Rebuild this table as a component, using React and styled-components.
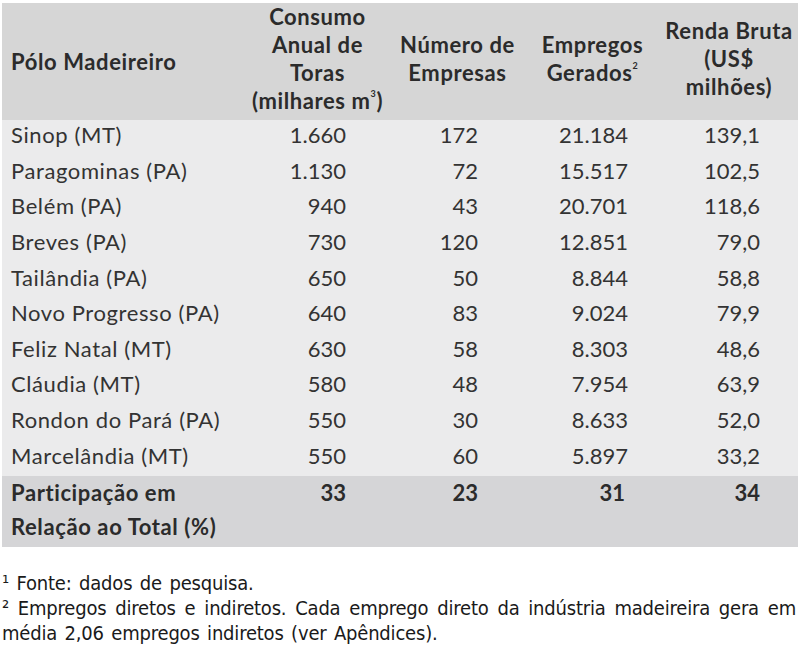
import React from 'react';
import styled, { createGlobalStyle } from 'styled-components';

const GlobalStyle = createGlobalStyle`
  html, body {
    margin: 0;
    padding: 0;
    background: #ffffff;
  }
`;

const Page = styled.div`
  width: 800px;
  height: 650px;
  padding: 3px 2px 0 2px;
  box-sizing: border-box;
  font-family: Lato, "Open Sans", sans-serif;
`;

const Table = styled.div`
  display: grid;
  grid-template-columns: 243px 145px 135px 135px 138px;
  background: #ebebec;
  color: #333333;
`;

const HeadCell = styled.div`
  background: #d6d6d6;
  height: 117px;
  box-sizing: border-box;
  padding-bottom: ${(p) => (p.left ? '0' : '6px')};
  display: flex;
  align-items: center;
  justify-content: ${(p) => (p.left ? 'flex-start' : 'center')};
  padding-left: ${(p) => (p.left ? '9px' : '0')};
  text-align: center;
  font-weight: 700;
  font-size: 22px;
  letter-spacing: 0.6px;
  line-height: 28px;
  color: #2b2b2b;
  white-space: nowrap;
`;

const Sup = styled.sup`
  font-size: 9px;
  vertical-align: 12px;
  line-height: 0;
`;

const Cell = styled.div`
  height: 35.6px;
  box-sizing: border-box;
  padding-bottom: 6px;
  display: flex;
  align-items: center;
  justify-content: ${(p) => (p.left ? 'flex-start' : 'flex-end')};
  padding-left: ${(p) => (p.left ? '9px' : '0')};
  padding-right: ${(p) => p.pr || 0}px;
  font-size: 22px;
  letter-spacing: ${(p) => (p.left ? '0.6px' : '0')};
  white-space: nowrap;
`;

const TotalCell = styled.div`
  background: #d5d5d7;
  height: 71px;
  display: flex;
  flex-direction: column;
  align-items: ${(p) => (p.left ? 'flex-start' : 'flex-end')};
  padding-left: ${(p) => (p.left ? '9px' : '0')};
  padding-right: ${(p) => p.pr || 0}px;
  padding-top: 0;
  box-sizing: border-box;
  font-weight: 700;
  font-size: 22px;
  letter-spacing: ${(p) => (p.left ? '0.6px' : '0')};
  line-height: 34px;
  color: #2b2b2b;
  white-space: nowrap;
`;

const Notes = styled.div`
  margin-top: 24px;
  font-family: "DejaVu Sans Condensed", "DejaVu Sans", Verdana, sans-serif;
  font-size: 20px;
  letter-spacing: -0.2px;
  line-height: 25px;
  color: #1a1a1a;
  text-align: justify;
  padding-right: 2px;
  word-spacing: 2px;
`;

const rows = [
  ['Sinop (MT)', '1.660', '172', '21.184', '139,1'],
  ['Paragominas (PA)', '1.130', '72', '15.517', '102,5'],
  ['Belém (PA)', '940', '43', '20.701', '118,6'],
  ['Breves (PA)', '730', '120', '12.851', '79,0'],
  ['Tailândia (PA)', '650', '50', '8.844', '58,8'],
  ['Novo Progresso (PA)', '640', '83', '9.024', '79,9'],
  ['Feliz Natal (MT)', '630', '58', '8.303', '48,6'],
  ['Cláudia (MT)', '580', '48', '7.954', '63,9'],
  ['Rondon do Pará (PA)', '550', '30', '8.633', '52,0'],
  ['Marcelândia (MT)', '550', '60', '5.897', '33,2'],
];

const pads = [0, 44, 47, 32, 38];

export default function App() {
  return (
    <Page>
      <GlobalStyle />
      <Table>
        <HeadCell left>Pólo Madeireiro</HeadCell>
        <HeadCell>
          <div>
            Consumo
            <br />
            Anual de
            <br />
            Toras
            <br />
            (milhares m<Sup>3</Sup>)
          </div>
        </HeadCell>
        <HeadCell>
          <div>
            Número de
            <br />
            Empresas
          </div>
        </HeadCell>
        <HeadCell>
          <div>
            Empregos
            <br />
            Gerados<Sup>2</Sup>
          </div>
        </HeadCell>
        <HeadCell>
          <div>
            Renda Bruta
            <br />
            (US$
            <br />
            milhões)
          </div>
        </HeadCell>
        {rows.map((r) =>
          r.map((v, i) => (
            <Cell key={r[0] + i} left={i === 0} pr={pads[i]}>
              {v}
            </Cell>
          ))
        )}
        <TotalCell left>
          <span>Participação em</span>
          <span>Relação ao Total (%)</span>
        </TotalCell>
        <TotalCell pr={44}>33</TotalCell>
        <TotalCell pr={47}>23</TotalCell>
        <TotalCell pr={35}>31</TotalCell>
        <TotalCell pr={38}>34</TotalCell>
      </Table>
      <Notes>
        <div>¹ Fonte: dados de pesquisa.</div>
        <div>
          ² Empregos diretos e indiretos. Cada emprego direto da indústria madeireira gera em
          média 2,06 empregos indiretos (ver Apêndices).
        </div>
      </Notes>
    </Page>
  );
}
